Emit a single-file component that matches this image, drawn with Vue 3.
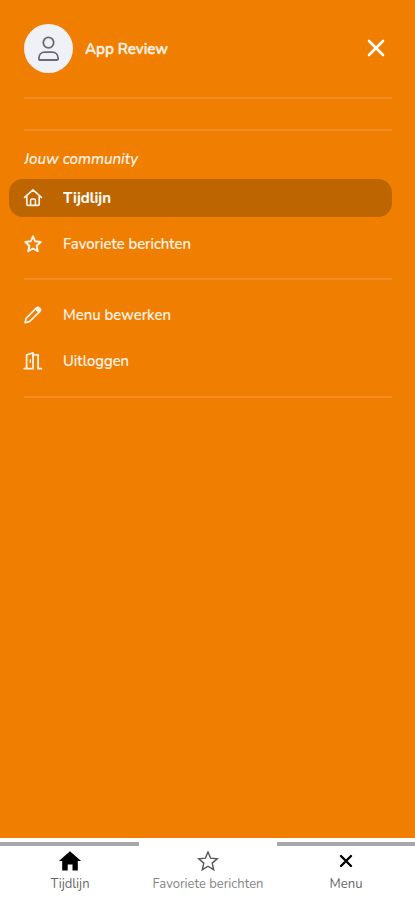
<script setup>
const community = [
  { label: 'Tijdlijn', icon: 'home', active: true, width: 48 },
  { label: 'Favoriete berichten', icon: 'star', width: 128 },
]
const actions = [
  { label: 'Menu bewerken', icon: 'pencil', width: 108 },
  { label: 'Uitloggen', icon: 'door', width: 66 },
]
const groups = [community, actions]
const tabs = [
  { label: 'Tijdlijn', icon: 'home', width: 39, marked: true },
  { label: 'Favoriete berichten', icon: 'star', width: 111, muted: true },
  { label: 'Menu', icon: 'close', width: 33, marked: true },
]
</script>

<template>
  <div class="screen">
    <div class="panel">
      <header class="profile">
        <div class="avatar">
          <svg width="23" height="27" viewBox="0 0 23 27" fill="none" stroke="#666b75" stroke-width="1.8">
            <circle cx="11.5" cy="7.6" r="5.2" />
            <path d="M1.9 24.1v-.9c0-3.6 2.4-6.1 6-6.1h7.2c3.6 0 6 2.5 6 6.1v.9c0 .6-.3.9-.9.9H2.8c-.6 0-.9-.3-.9-.9z" />
          </svg>
        </div>
        <svg class="label" width="90" height="24"><text class="name" x="0" y="16.9" textLength="83" lengthAdjust="spacingAndGlyphs">App Review</text></svg>
        <svg class="close" width="18" height="18" viewBox="0 0 18 18" stroke="#fff" stroke-width="2.6" stroke-linecap="round">
          <path d="M2 2l14 14M16 2L2 16" />
        </svg>
      </header>
      <div class="rule"></div>
      <div class="rule second"></div>
      <svg class="heading" width="130" height="24"><text x="0" y="16.7" textLength="114" lengthAdjust="spacingAndGlyphs">Jouw community</text></svg>
      <nav v-for="(group, g) in groups" :key="g" :class="['group', 'group-' + g]">
        <div v-for="item in group" :key="item.label" :class="['item', { active: item.active }]">
          <svg class="icon" width="20" height="20" viewBox="0 0 20 20" fill="none" stroke="#fff3e8" stroke-width="1.7" stroke-linejoin="round" stroke-linecap="round">
            <template v-if="item.icon === 'home'">
              <path d="M1.6 9.4L10 1.8l8.4 7.6M3.8 8v8c0 .9.5 1.4 1.4 1.4h9.6c.9 0 1.4-.5 1.4-1.4V8" />
              <path d="M7.6 17v-4.8c0-.8.4-1.2 1.2-1.2h2.4c.8 0 1.2.4 1.2 1.2V17" stroke-width="1.5" />
            </template>
            <path v-else-if="item.icon === 'star'" d="M10 2.4l2.3 4.9 5.4.7-4 3.7 1 5.5-4.7-2.7-4.7 2.7 1-5.5-4-3.7 5.4-.7z" stroke-width="2" />
            <template v-else-if="item.icon === 'pencil'">
              <path d="M2.1 17.7l1-4.3L13.5 2.9c.9-.9 1.7-.9 2.6 0l.8.8c.9.9.9 1.7 0 2.6L6.4 16.7z" />
              <path d="M12.3 4.1l3.4 3.4 1.5-1.4c.7-.8.7-1.5 0-2.2l-1.2-1.2c-.7-.6-1.4-.6-2.1 0z" fill="#fff3e8" stroke-width="1" />
            </template>
            <template v-else>
              <path d="M1.4 17.7h2.2V3.9L10 1.9v15.8H5.8M3.6 17.7h3M10 3.9h5.1v13.8h3.3" stroke-width="1.8" />
              <path d="M7.3 8.8v2.5" stroke-width="1.4" />
            </template>
          </svg>
          <svg class="label" width="140" height="24"><text x="0" y="17" :textLength="item.width" lengthAdjust="spacingAndGlyphs">{{ item.label }}</text></svg>
        </div>
      </nav>
    </div>
    <footer class="tabs">
      <div v-for="tab in tabs" :key="tab.label" :class="['tab', { marked: tab.marked, muted: tab.muted }]">
        <svg width="24" height="24" viewBox="0 0 24 24">
          <path v-if="tab.icon === 'home'" d="M12 2.2L23.1 12.1h-3.3v9.5h-5.3v-6H9.7v6H4.2v-9.5H.9z" fill="#000" />
          <path v-else-if="tab.icon === 'star'" d="M12 3l2.6 6.1 6.7.6-5.1 4.4 1.5 6.6-5.7-3.5-5.7 3.5 1.5-6.6-5.1-4.4 6.7-.6z" fill="none" stroke="#555" stroke-width="1.4" />
          <path v-else d="M7 7l10 10M17 7L7 17" stroke="#000" stroke-width="2.4" stroke-linecap="round" />
        </svg>
        <svg class="caption" width="120" height="20"><text x="60" y="13" text-anchor="middle" :textLength="tab.width" lengthAdjust="spacingAndGlyphs">{{ tab.label }}</text></svg>
      </div>
    </footer>
  </div>
</template>

<style>
body { margin: 0; }
</style>
<style scoped>
.screen {
  width: 415px;
  height: 900px;
  display: flex;
  flex-direction: column;
  overflow: hidden;
  background: #fff;
  font-family: Nunito, Lato, sans-serif;
}
svg { display: block; flex: none; }
.panel {
  height: 837.5px;
  flex: none;
  box-sizing: border-box;
  padding: 24px 23px 0 24px;
  background: #f07e00;
}
.profile { display: flex; align-items: center; height: 49px; }
.avatar {
  width: 49px;
  height: 49px;
  margin-right: 12px;
  border-radius: 50%;
  background: #f0f0f7;
  display: flex;
  align-items: center;
  justify-content: center;
}
.label text, .heading text { fill: #fff3e8; font-size: 15px; font-weight: 500; stroke: #fff3e8; stroke-width: 0.15px; }
.label .name { font-weight: 600; stroke-width: 0.4px; }
.close { margin: 0 7px 2px auto; }
.rule { height: 2px; margin-top: 24px; background: #f38c25; }
.rule.second { margin-top: 30px; }
.heading { margin-top: 16px; }
.heading text { font-style: italic; }
.group { border-bottom: 2px solid #f38c25; }
.group-0 { padding: 8px 0 15px; }
.group-1 { padding: 16px 0 16px; }
.item { display: flex; align-items: center; height: 38px; margin-left: -15px; padding-left: 14px; border-radius: 14px; }
.item + .item { margin-top: 8px; }
.item.active { background: #bd6500; }
.item.active text { font-weight: 700; fill: #fff; }
.icon { margin-right: 20px; }
.tabs { flex: 1; display: grid; grid-template-columns: 139px 138px 138px; padding-top: 4.5px; }
.tab { display: flex; flex-direction: column; align-items: center; border-top: 4px solid transparent; padding-top: 3px; }
.tab.marked { border-color: #a8a6aa; }
.caption { margin-top: 2px; }
.caption text { font-size: 13px; fill: #666; }
.muted .caption text { fill: #858585; }
</style>
